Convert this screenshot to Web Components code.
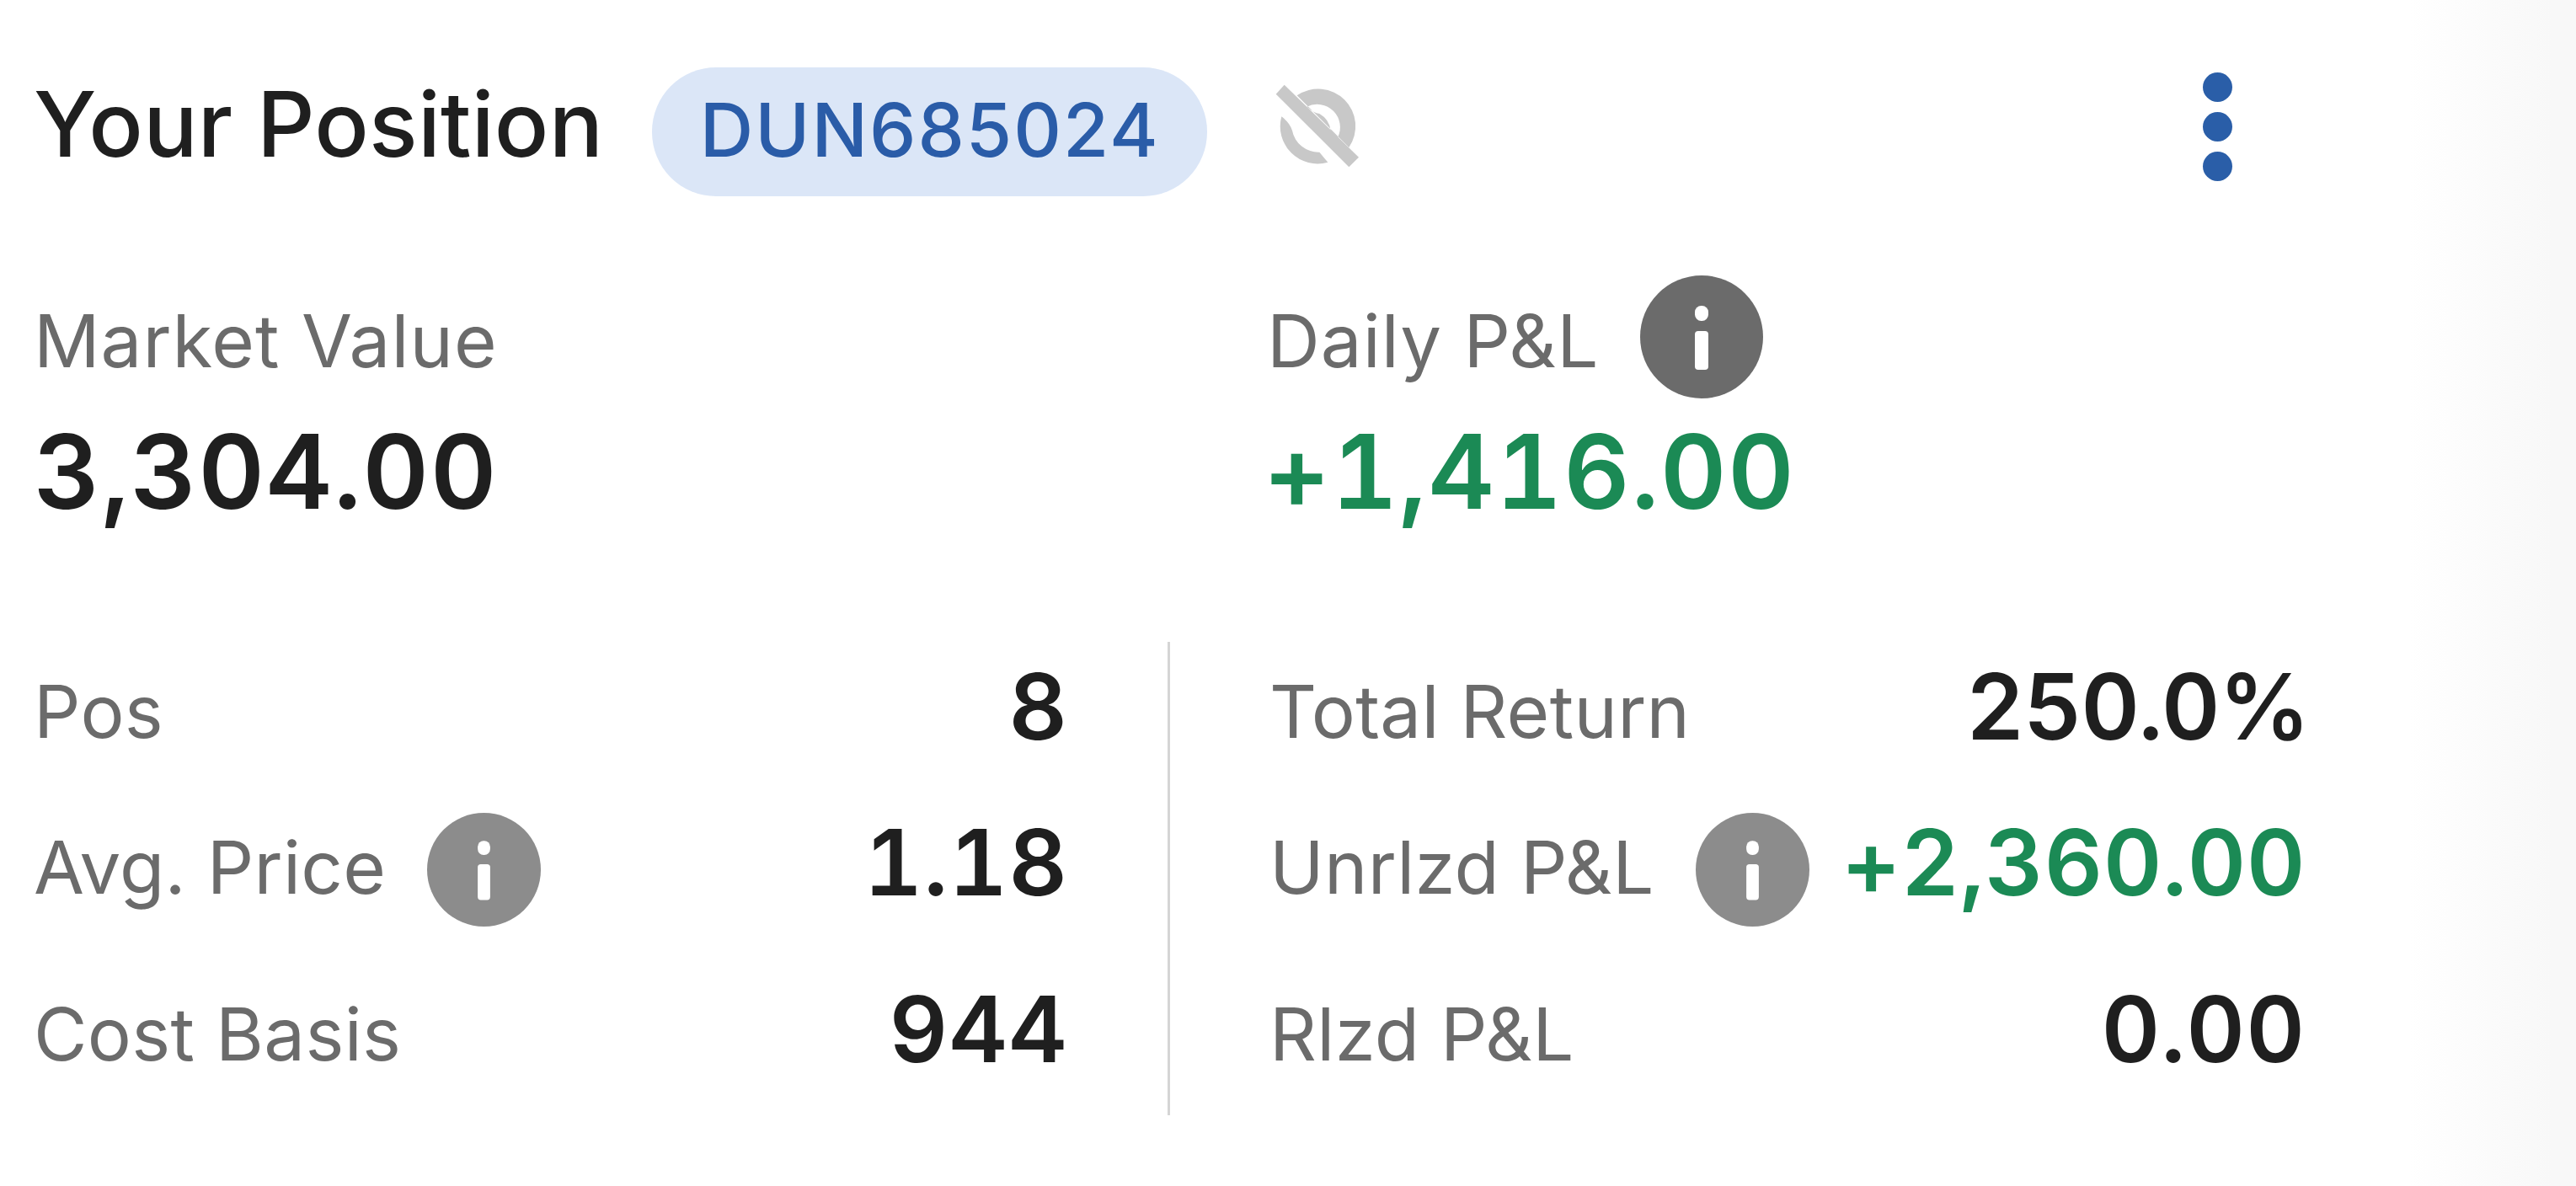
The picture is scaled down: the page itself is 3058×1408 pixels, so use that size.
<!DOCTYPE html>
<html>
<head>
<meta charset="utf-8">
<style>
  html, body { margin: 0; height: 100%; }
  body {
    background: linear-gradient(to right, #fff 0, #fff 2860px, #f8f8f8 3030px, #f8f8f8 100%);
    font-family: Inter, "Liberation Sans", sans-serif;
    overflow: hidden;
  }
</style>
</head>
<body>
<position-panel>
  <position-header>
    <span slot="title">Your Position</span>
    <span slot="account">DUN685024</span>
  </position-header>
  <div slot="metrics">
    <metric-block>Market Value<span slot="value">3,304.00</span></metric-block>
  </div>
  <div slot="metrics">
    <metric-block info tone="up">Daily P&amp;L<span slot="value" style="margin-left:-4px">+1,416.00</span></metric-block>
  </div>
  <stat-list slot="left">
    <stat-row h="170">Pos<span slot="value">8</span></stat-row>
    <stat-row h="200" info>Avg. Price<span slot="value">1.18</span></stat-row>
    <stat-row h="196">Cost Basis<span slot="value">944</span></stat-row>
  </stat-list>
  <stat-list slot="right">
    <stat-row h="170">Total Return<span slot="value" style="letter-spacing:-1.6px;margin-right:-4px">250.0%</span></stat-row>
    <stat-row h="200" info tone="up">Unrlzd P&amp;L<span slot="value" style="letter-spacing:.4px">+2,360.00</span></stat-row>
    <stat-row h="196">Rlzd P&amp;L<span slot="value">0.00</span></stat-row>
  </stat-list>
</position-panel>

<script>
// small round "i" badge
class InfoIcon extends HTMLElement {
  constructor() {
    super();
    this.attachShadow({ mode: "open" });
    this.shadowRoot.innerHTML = `
      <style>
        :host { display: inline-flex; flex: none; width: var(--info-size, 135px); height: var(--info-size, 135px); color: var(--info-color, #8c8c8c); }
        svg { width: 100%; height: 100%; display: block; }
      </style>
      <svg viewBox="0 0 146 146">
        <circle cx="73" cy="73" r="73" fill="currentColor"/>
        <rect x="65" y="36" width="16" height="18" rx="7.5" fill="#fff"/>
        <rect x="65" y="66" width="16" height="46" rx="4" fill="#fff"/>
      </svg>`;
  }
}
customElements.define("info-icon", InfoIcon);

class HideIcon extends HTMLElement {
  constructor() {
    super();
    this.attachShadow({ mode: "open" });
    this.shadowRoot.innerHTML = `
      <style>
        :host { display: block; flex: none; width: 160px; height: 160px; }
        svg { width: 100%; height: 100%; display: block; }
      </style>
      <svg viewBox="0 0 480 480" fill="#c8c8c8">
        <path d="M70 235A133 133 0 0 0 235 398L205 362A95 95 0 0 1 108 285Q100 258 70 235Z"/>
        <path fill-rule="evenodd" d="M125 160A133 133 0 0 1 310 345L125 160ZM160 200A82 82 0 0 1 270 310L245 285Q240 245 205 225Q185 222 160 200Z"/>
        <polygon points="80,122 50,155 310,415 345,380"/>
      </svg>`;
  }
}
customElements.define("hide-icon", HideIcon);

class MoreDots extends HTMLElement {
  constructor() {
    super();
    this.attachShadow({ mode: "open" });
    this.shadowRoot.innerHTML = `
      <style>
        :host { display: flex; flex-direction: column; gap: 12px; flex: none; }
        i { display: block; width: 35px; height: 35px; border-radius: 50%; background: #2a5ea8; }
      </style>
      <i></i><i></i><i></i>`;
  }
}
customElements.define("more-dots", MoreDots);

class PositionHeader extends HTMLElement {
  constructor() {
    super();
    this.attachShadow({ mode: "open" });
    this.shadowRoot.innerHTML = `
      <style>
        :host { display: flex; align-items: center; width: 2610px; height: 153px; }
        .title { font-size: 107px; font-weight: 500; color: #1f1f1f; letter-spacing: .2px; line-height: 1; margin-right: 58px; margin-top: -18px; }
        .pill { display: flex; align-items: center; justify-content: center; box-sizing: border-box; width: 659px; height: 153px; padding-bottom: 6px; border-radius: 76px; background: #dbe6f7; color: #2a5ca8; font-size: 88px; font-weight: 500; letter-spacing: 2px; }
        hide-icon { margin-left: 65px; margin-top: -34px; }
        more-dots { margin-left: auto; margin-top: -12px; }
      </style>
      <div class="title"><slot name="title"></slot></div>
      <div class="pill"><slot name="account"></slot></div>
      <hide-icon></hide-icon>
      <more-dots></more-dots>`;
  }
}
customElements.define("position-header", PositionHeader);

class MetricBlock extends HTMLElement {
  constructor() {
    super();
    this.attachShadow({ mode: "open" });
    const info = this.hasAttribute("info") ? "<info-icon></info-icon>" : "";
    const color = this.getAttribute("tone") === "up" ? "#1b8a55" : "#1f1f1f";
    this.shadowRoot.innerHTML = `
      <style>
        :host { display: block; --info-size: 146px; --info-color: #6b6b6b; }
        .top { display: flex; align-items: center; gap: 49px; height: 146px; font-size: 87px; color: #6b6b6b; letter-spacing: 1px; }
        .top span { margin-top: 8px; white-space: nowrap; }
        .value { margin-top: 27px; font-size: 122px; font-weight: 600; line-height: 120px; color: ${color}; letter-spacing: 1.5px; font-variant-numeric: tabular-nums; }
      </style>
      <div class="top"><span><slot></slot></span>${info}</div>
      <div class="value"><slot name="value"></slot></div>`;
  }
}
customElements.define("metric-block", MetricBlock);

class StatRow extends HTMLElement {
  constructor() {
    super();
    this.attachShadow({ mode: "open" });
    const info = this.hasAttribute("info") ? "<info-icon></info-icon>" : "";
    const color = this.getAttribute("tone") === "up" ? "#1b8a55" : "#1f1f1f";
    this.shadowRoot.innerHTML = `
      <style>
        :host { display: flex; align-items: center; height: ${this.getAttribute("h")}px; font-size: 87px; color: #6b6b6b; letter-spacing: .3px; }
        .label { margin-top: -6px; margin-right: 49px; white-space: nowrap; }
        .value { margin-left: auto; margin-top: -16px; font-size: 108px; font-weight: 600; color: ${color}; letter-spacing: 1px; line-height: 1; white-space: nowrap; font-variant-numeric: tabular-nums; }
      </style>
      <span class="label"><slot></slot></span>${info}
      <span class="value"><slot name="value"></slot></span>`;
  }
}
customElements.define("stat-row", StatRow);

class StatList extends HTMLElement {
  constructor() {
    super();
    this.attachShadow({ mode: "open" });
    this.shadowRoot.innerHTML = `
      <style>:host { display: block; }</style>
      <slot></slot>`;
  }
}
customElements.define("stat-list", StatList);

class PositionPanel extends HTMLElement {
  constructor() {
    super();
    this.attachShadow({ mode: "open" });
    this.shadowRoot.innerHTML = `
      <style>
        :host { display: block; padding: 80px 0 0 40px; }
        .metrics { display: grid; grid-template-columns: 1464px 1230px; margin-top: 94px; }
        .stats { display: grid; grid-template-columns: 1228px 3px 1230px; column-gap: 118px; margin-top: 142px; }
        .rule { background: #d5d5d5; height: 562px; }
      </style>
      <slot></slot>
      <div class="metrics"><slot name="metrics"></slot></div>
      <div class="stats">
        <slot name="left"></slot>
        <div class="rule"></div>
        <slot name="right"></slot>
      </div>`;
  }
}
customElements.define("position-panel", PositionPanel);
</script>
</body>
</html>
